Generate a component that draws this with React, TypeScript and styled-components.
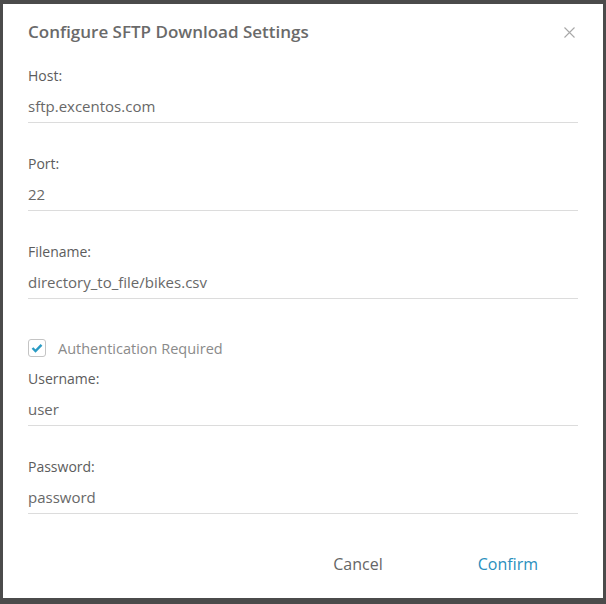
import React from "react";
import styled, { createGlobalStyle } from "styled-components";

const Global = createGlobalStyle`
  html, body { margin: 0; padding: 0; background: #4b4b4b; }
  body { font-family: "Open Sans", "Liberation Sans", sans-serif; }
  * { box-sizing: border-box; }
`;

const Backdrop = styled.div`
  width: 606px;
  height: 604px;
  padding: 4px 3px 6px 3px;
  background: #4b4b4b;
`;

const Dialog = styled.div`
  width: 600px;
  height: 594px;
  background: #ffffff;
  padding: 0 25px;
  display: flex;
  flex-direction: column;
`;

const Header = styled.div`
  display: flex;
  align-items: center;
  justify-content: space-between;
  padding-top: 14px;
  height: 42px;
`;

const Title = styled.h2`
  margin: 0;
  font-size: 17px;
  font-weight: 600;
  color: #6a6a6a;
  line-height: 24px;
`;

const Close = styled.button`
  border: none;
  background: none;
  padding: 0;
  margin-right: 2px;
  width: 14px;
  height: 14px;
  display: flex;
  align-items: center;
  justify-content: center;
  cursor: pointer;
`;

const Form = styled.div`
  display: flex;
  flex-direction: column;
  padding-top: 19px;
`;

const Field = styled.div`
  display: flex;
  flex-direction: column;
  margin-bottom: 30px;
`;

const Label = styled.label`
  font-size: 14px;
  line-height: 22px;
  color: #5c5c5c;
  margin-bottom: 8px;
`;

const Value = styled.div`
  font-size: 15px;
  line-height: 22px;
  color: #686868;
  padding-bottom: 5px;
  border-bottom: 1px solid #dcdcdc;
`;

const CheckRow = styled.div`
  display: flex;
  align-items: center;
  gap: 12px;
  height: 24px;
  margin-top: 7px;
  margin-bottom: 8px;
`;

const Box = styled.span`
  width: 18px;
  height: 18px;
  border: 1px solid #c4c4c4;
  border-radius: 3px;
  display: flex;
  align-items: center;
  justify-content: center;
`;

const CheckText = styled.span`
  font-size: 14.5px;
  color: #8a8a8a;
`;

const Footer = styled.div`
  margin-top: auto;
  margin-bottom: 16px;
  display: flex;
  justify-content: flex-end;
  gap: 15px;
`;

const Button = styled.button<{ $primary?: boolean }>`
  border: none;
  background: none;
  height: 36px;
  padding: 0 40px;
  font-family: "Open Sans", "Liberation Sans", sans-serif;
  font-size: 16px;
  color: ${(p) => (p.$primary ? "#2a8fbd" : "#666666")};
  cursor: pointer;
`;

const fields = [
  { label: "Host:", value: "sftp.excentos.com" },
  { label: "Port:", value: "22" },
  { label: "Filename:", value: "directory_to_file/bikes.csv" },
];

const auth = [
  { label: "Username:", value: "user" },
  { label: "Password:", value: "password" },
];

export default function App() {
  return (
    <>
      <Global />
      <Backdrop>
        <Dialog>
          <Header>
            <Title>Configure SFTP Download Settings</Title>
            <Close aria-label="Close">
              <svg width="11" height="11" viewBox="0 0 11 11">
                <path d="M0.5 0.5 L10.5 10.5 M10.5 0.5 L0.5 10.5" stroke="#a8a8a8" strokeWidth="1.1" />
              </svg>
            </Close>
          </Header>
          <Form>
            {fields.map((f) => (
              <Field key={f.label}>
                <Label>{f.label}</Label>
                <Value>{f.value}</Value>
              </Field>
            ))}
            <CheckRow>
              <Box>
                <svg width="12" height="10" viewBox="0 0 12 10">
                  <path d="M1.5 5 L4.5 8 L10.5 1.8" stroke="#2a9bc4" strokeWidth="2.4" fill="none" />
                </svg>
              </Box>
              <CheckText>Authentication Required</CheckText>
            </CheckRow>
            {auth.map((f) => (
              <Field key={f.label}>
                <Label>{f.label}</Label>
                <Value>{f.value}</Value>
              </Field>
            ))}
          </Form>
          <Footer>
            <Button>Cancel</Button>
            <Button $primary>Confirm</Button>
          </Footer>
        </Dialog>
      </Backdrop>
    </>
  );
}
